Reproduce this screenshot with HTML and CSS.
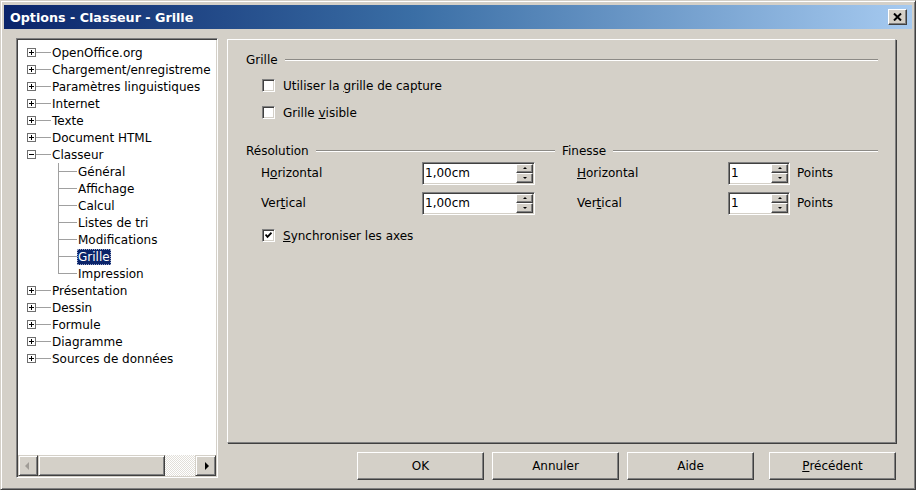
FILE: index.html
```html
<!DOCTYPE html>
<html lang="fr">
<head>
<meta charset="utf-8">
<title>Options - Classeur - Grille</title>
<link rel="stylesheet" href="styles.css">
</head>
<body>
<div class="window">
  <div class="titlebar">
    <span class="title">Options - Classeur - Grille</span>
    <span class="close"><svg width="9" height="8" viewBox="0 0 9 8"><path d="M1 0.5 L8 7.5 M8 0.5 L1 7.5" stroke="#000" stroke-width="2" fill="none"/></svg></span>
  </div>
  <div class="main">
    <div class="tree">
      <ul class="tree-list">
        <li class="node root"><svg class="exp" width="9" height="9" viewBox="0 0 9 9"><rect x="0.5" y="0.5" width="8" height="8" fill="#fff" stroke="#6f6f6f"/><path d="M2 4.5H7M4.5 2V7" stroke="#000"/></svg><span class="hline"></span><span class="label">OpenOffice.org</span></li>
        <li class="node root"><svg class="exp" width="9" height="9" viewBox="0 0 9 9"><rect x="0.5" y="0.5" width="8" height="8" fill="#fff" stroke="#6f6f6f"/><path d="M2 4.5H7M4.5 2V7" stroke="#000"/></svg><span class="hline"></span><span class="label">Chargement/enregistreme</span></li>
        <li class="node root"><svg class="exp" width="9" height="9" viewBox="0 0 9 9"><rect x="0.5" y="0.5" width="8" height="8" fill="#fff" stroke="#6f6f6f"/><path d="M2 4.5H7M4.5 2V7" stroke="#000"/></svg><span class="hline"></span><span class="label">Paramètres linguistiques</span></li>
        <li class="node root"><svg class="exp" width="9" height="9" viewBox="0 0 9 9"><rect x="0.5" y="0.5" width="8" height="8" fill="#fff" stroke="#6f6f6f"/><path d="M2 4.5H7M4.5 2V7" stroke="#000"/></svg><span class="hline"></span><span class="label">Internet</span></li>
        <li class="node root"><svg class="exp" width="9" height="9" viewBox="0 0 9 9"><rect x="0.5" y="0.5" width="8" height="8" fill="#fff" stroke="#6f6f6f"/><path d="M2 4.5H7M4.5 2V7" stroke="#000"/></svg><span class="hline"></span><span class="label">Texte</span></li>
        <li class="node root"><svg class="exp" width="9" height="9" viewBox="0 0 9 9"><rect x="0.5" y="0.5" width="8" height="8" fill="#fff" stroke="#6f6f6f"/><path d="M2 4.5H7M4.5 2V7" stroke="#000"/></svg><span class="hline"></span><span class="label">Document HTML</span></li>
        <li class="node root"><svg class="exp" width="9" height="9" viewBox="0 0 9 9"><rect x="0.5" y="0.5" width="8" height="8" fill="#fff" stroke="#6f6f6f"/><path d="M2 4.5H7" stroke="#000"/></svg><span class="hline"></span><span class="label">Classeur</span></li>
        <li class="node child"><span class="conn"></span><span class="label">Général</span></li>
        <li class="node child"><span class="conn"></span><span class="label">Affichage</span></li>
        <li class="node child"><span class="conn"></span><span class="label">Calcul</span></li>
        <li class="node child"><span class="conn"></span><span class="label">Listes de tri</span></li>
        <li class="node child"><span class="conn"></span><span class="label">Modifications</span></li>
        <li class="node child"><span class="conn"></span><span class="label sel">Grille</span></li>
        <li class="node child last"><span class="conn"></span><span class="label">Impression</span></li>
        <li class="node root"><svg class="exp" width="9" height="9" viewBox="0 0 9 9"><rect x="0.5" y="0.5" width="8" height="8" fill="#fff" stroke="#6f6f6f"/><path d="M2 4.5H7M4.5 2V7" stroke="#000"/></svg><span class="hline"></span><span class="label">Présentation</span></li>
        <li class="node root"><svg class="exp" width="9" height="9" viewBox="0 0 9 9"><rect x="0.5" y="0.5" width="8" height="8" fill="#fff" stroke="#6f6f6f"/><path d="M2 4.5H7M4.5 2V7" stroke="#000"/></svg><span class="hline"></span><span class="label">Dessin</span></li>
        <li class="node root"><svg class="exp" width="9" height="9" viewBox="0 0 9 9"><rect x="0.5" y="0.5" width="8" height="8" fill="#fff" stroke="#6f6f6f"/><path d="M2 4.5H7M4.5 2V7" stroke="#000"/></svg><span class="hline"></span><span class="label">Formule</span></li>
        <li class="node root"><svg class="exp" width="9" height="9" viewBox="0 0 9 9"><rect x="0.5" y="0.5" width="8" height="8" fill="#fff" stroke="#6f6f6f"/><path d="M2 4.5H7M4.5 2V7" stroke="#000"/></svg><span class="hline"></span><span class="label">Diagramme</span></li>
        <li class="node root"><svg class="exp" width="9" height="9" viewBox="0 0 9 9"><rect x="0.5" y="0.5" width="8" height="8" fill="#fff" stroke="#6f6f6f"/><path d="M2 4.5H7M4.5 2V7" stroke="#000"/></svg><span class="hline"></span><span class="label">Sources de données</span></li>
      </ul>
      <div class="hscroll">
        <span class="sbtn"><i class="arr-left"></i></span>
        <span class="thumb"></span>
        <span class="track"></span>
        <span class="sbtn"><i class="arr-right"></i></span>
      </div>
    </div>
    <div class="content">
      <div class="page">
        <div class="group-head"><span>Grille</span><span class="rule"></span></div>
        <div class="grid-checks">
          <div class="check-row"><span class="cb"></span><span class="cb-label">Utiliser la <u>g</u>rille de capture</span></div>
          <div class="check-row"><span class="cb"></span><span class="cb-label">Grille <u>v</u>isible</span></div>
        </div>
        <div class="cols">
          <div class="col">
            <div class="group-head"><span>Résolution</span><span class="rule"></span></div>
            <div class="field-row">
              <span class="flabel res">H<u>o</u>rizontal</span>
              <span class="spin wide"><span class="val">1,00cm</span><span class="spin-btns"><span class="sb"><i class="tri-up"></i></span><span class="sb"><i class="tri-down"></i></span></span></span>
            </div>
            <div class="field-row">
              <span class="flabel res">Ver<u>t</u>ical</span>
              <span class="spin wide"><span class="val">1,00cm</span><span class="spin-btns"><span class="sb"><i class="tri-up"></i></span><span class="sb"><i class="tri-down"></i></span></span></span>
            </div>
            <div class="check-row sync"><span class="cb"><svg width="7" height="7" viewBox="0 0 7 7"><path d="M0.5 2.5 L2.5 4.8 L6.5 0.7" stroke="#000" stroke-width="1.8" fill="none"/></svg></span><span class="cb-label"><u>S</u>ynchroniser les axes</span></div>
          </div>
          <div class="col">
            <div class="group-head"><span>Finesse</span><span class="rule"></span></div>
            <div class="field-row">
              <span class="flabel fin"><u>H</u>orizontal</span>
              <span class="spin narrow"><span class="val">1</span><span class="spin-btns"><span class="sb"><i class="tri-up"></i></span><span class="sb"><i class="tri-down"></i></span></span></span>
              <span class="unit">Points</span>
            </div>
            <div class="field-row">
              <span class="flabel fin">Ver<u>t</u>ical</span>
              <span class="spin narrow"><span class="val">1</span><span class="spin-btns"><span class="sb"><i class="tri-up"></i></span><span class="sb"><i class="tri-down"></i></span></span></span>
              <span class="unit">Points</span>
            </div>
          </div>
        </div>
      </div>
      <div class="buttons">
        <span class="btn">OK</span>
        <span class="btn">Annuler</span>
        <span class="btn">Aide</span>
        <span class="btn back"><u>P</u>récédent</span>
      </div>
    </div>
  </div>
</div>
</body>
</html>
```

FILE: styles.css
```css
html, body {
  margin: 0;
  padding: 0;
  background: #ffffff;
}

body {
  font-family: "DejaVu Sans", Verdana, sans-serif;
  font-size: 12px;
  color: #000;
}

.window {
  box-sizing: border-box;
  width: 916px;
  height: 490px;
  background: #d4d0c8;
  border: 1px solid;
  border-color: #d4d0c8 #404040 #404040 #d4d0c8;
  box-shadow: inset 1px 1px #ffffff, inset -1px -1px #808080;
  padding: 4px 3px 0 3px;
}

.titlebar {
  height: 24px;
  display: flex;
  align-items: center;
  padding: 0 5px 0 6px;
  background: linear-gradient(to right, #0a246a 0%, #3a6ea5 45%, #a6caf0 100%);
}

.title {
  color: #fff;
  font-weight: bold;
  font-size: 12.7px;
}

.close {
  margin-left: auto;
  box-sizing: border-box;
  width: 19px;
  height: 16px;
  background: #d4d0c8;
  border: 1px solid;
  border-color: #fff #404040 #404040 #fff;
  box-shadow: inset -1px -1px #808080;
  display: flex;
  align-items: center;
  justify-content: center;
}

.main {
  display: flex;
  margin-top: 9px;
}

/* tree */
.tree {
  box-sizing: border-box;
  width: 202px;
  height: 440px;
  margin-left: 12px;
  background: #fff;
  border: 1px solid;
  border-color: #808080 #fff #fff #808080;
  box-shadow: inset 1px 1px #404040, inset -1px -1px #d4d0c8;
  padding: 1px;
  display: flex;
  flex-direction: column;
}

.tree-list {
  list-style: none;
  margin: 0;
  padding: 4px 0 0 0;
  flex: 1;
  overflow: hidden;
  white-space: nowrap;
}

.node {
  height: 17px;
  display: flex;
  align-items: center;
}

.node.root {
  padding-left: 9px;
}

.exp {
  flex: none;
  display: block;
}

.hline {
  flex: none;
  width: 15px;
  height: 1px;
  background: #a0a0a0;
}

.label {
  padding: 0 1px;
  line-height: 16px;
  height: 16px;
}

.node.child {
  padding-left: 40px;
}

.conn {
  flex: none;
  align-self: stretch;
  width: 19px;
  background:
    linear-gradient(#a0a0a0, #a0a0a0) no-repeat 0 0 / 1px 100%,
    linear-gradient(#a0a0a0, #a0a0a0) no-repeat 0 8px / 100% 1px;
}

.node.last .conn {
  background:
    linear-gradient(#a0a0a0, #a0a0a0) no-repeat 0 0 / 1px 9px,
    linear-gradient(#a0a0a0, #a0a0a0) no-repeat 0 8px / 100% 1px;
}

.label.sel {
  background: #0a246a;
  color: #fff;
  outline: 1px dotted #9aa6c8;
  outline-offset: -1px;
}

.hscroll {
  height: 21px;
  display: flex;
  flex: none;
}

.sbtn, .thumb {
  box-sizing: border-box;
  background: #d4d0c8;
  border: 1px solid;
  border-color: #d4d0c8 #404040 #404040 #d4d0c8;
  box-shadow: inset 1px 1px #fff, inset -1px -1px #808080;
}

.sbtn {
  width: 20px;
  display: flex;
  align-items: center;
  justify-content: center;
}

.sbtn:last-child {
  width: 21px;
}

.thumb {
  width: 127px;
}

.track {
  flex: 1;
  background: repeating-conic-gradient(#ffffff 0 25%, #e2dfd9 0 50%) 0 0 / 2px 2px;
}

.arr-left {
  width: 0;
  height: 0;
  border-top: 4px solid transparent;
  border-bottom: 4px solid transparent;
  border-right: 4px solid #a09c96;
  margin-right: 2px;
}

.arr-right {
  width: 0;
  height: 0;
  border-top: 4px solid transparent;
  border-bottom: 4px solid transparent;
  border-left: 4px solid #000;
  margin-left: 2px;
}

/* right side */
.content {
  margin-left: 9px;
  margin-top: 1px;
  width: 669px;
  display: flex;
  flex-direction: column;
}

.page {
  box-sizing: border-box;
  height: 404px;
  border: 1px solid;
  border-color: #fff #808080 #808080 #fff;
  box-shadow: 1px 1px 0 #404040;
  padding: 13px 17px 0 18px;
}

.group-head {
  display: flex;
  align-items: center;
  height: 14px;
  line-height: 14px;
}

.rule {
  flex: 1;
  height: 0;
  margin-left: 7px;
  border-top: 1px solid #8c8a86;
  border-bottom: 1px solid #fff;
}

.grid-checks {
  margin-top: 5px;
}

.check-row {
  height: 27px;
  display: flex;
  align-items: center;
  padding-left: 16px;
}

.cb {
  flex: none;
  box-sizing: border-box;
  width: 13px;
  height: 13px;
  background: #fff;
  border: 1px solid;
  border-color: #808080 #fff #fff #808080;
  box-shadow: inset 1px 1px #404040, inset -1px -1px #d4d0c8;
  display: flex;
  align-items: center;
  justify-content: center;
}

.cb svg {
  display: block;
}

.cb-label {
  margin-left: 8px;
}

.cols {
  margin-top: 18px;
  display: grid;
  grid-template-columns: 309px 316px;
  column-gap: 7px;
}

.field-row {
  height: 30px;
  display: flex;
  align-items: center;
  padding-left: 15px;
}

.flabel.res {
  width: 161px;
}

.flabel.fin {
  width: 151px;
}

.spin {
  box-sizing: border-box;
  height: 23px;
  background: #fff;
  border: 1px solid;
  border-color: #808080 #fff #fff #808080;
  box-shadow: inset 1px 1px #404040, inset -1px -1px #d4d0c8;
  padding: 1px;
  display: flex;
}

.spin.wide {
  width: 113px;
}

.spin.narrow {
  width: 62px;
}

.val {
  flex: 1;
  padding-left: 1px;
  line-height: 19px;
}

.spin-btns {
  width: 17px;
  display: flex;
  flex-direction: column;
}

.sb {
  flex: 1;
  box-sizing: border-box;
  background: #d4d0c8;
  border: 1px solid;
  border-color: #fff #404040 #404040 #fff;
  box-shadow: inset -1px -1px #808080;
  display: flex;
  align-items: center;
  justify-content: center;
}

.tri-up {
  width: 0;
  height: 0;
  border-left: 2px solid transparent;
  border-right: 2px solid transparent;
  border-bottom: 2px solid #000;
}

.tri-down {
  width: 0;
  height: 0;
  border-left: 2px solid transparent;
  border-right: 2px solid transparent;
  border-top: 2px solid #000;
}

.unit {
  margin-left: 7px;
}

.check-row.sync {
  margin-top: 4px;
}

/* buttons */
.buttons {
  margin-top: 9px;
  display: flex;
  justify-content: flex-end;
  gap: 8px;
}

.btn {
  box-sizing: border-box;
  width: 127px;
  height: 28px;
  background: #d4d0c8;
  border: 1px solid;
  border-color: #fff #404040 #404040 #fff;
  box-shadow: inset -1px -1px #808080;
  display: flex;
  align-items: center;
  justify-content: center;
}

.btn.back {
  margin-left: 7px;
}
```
